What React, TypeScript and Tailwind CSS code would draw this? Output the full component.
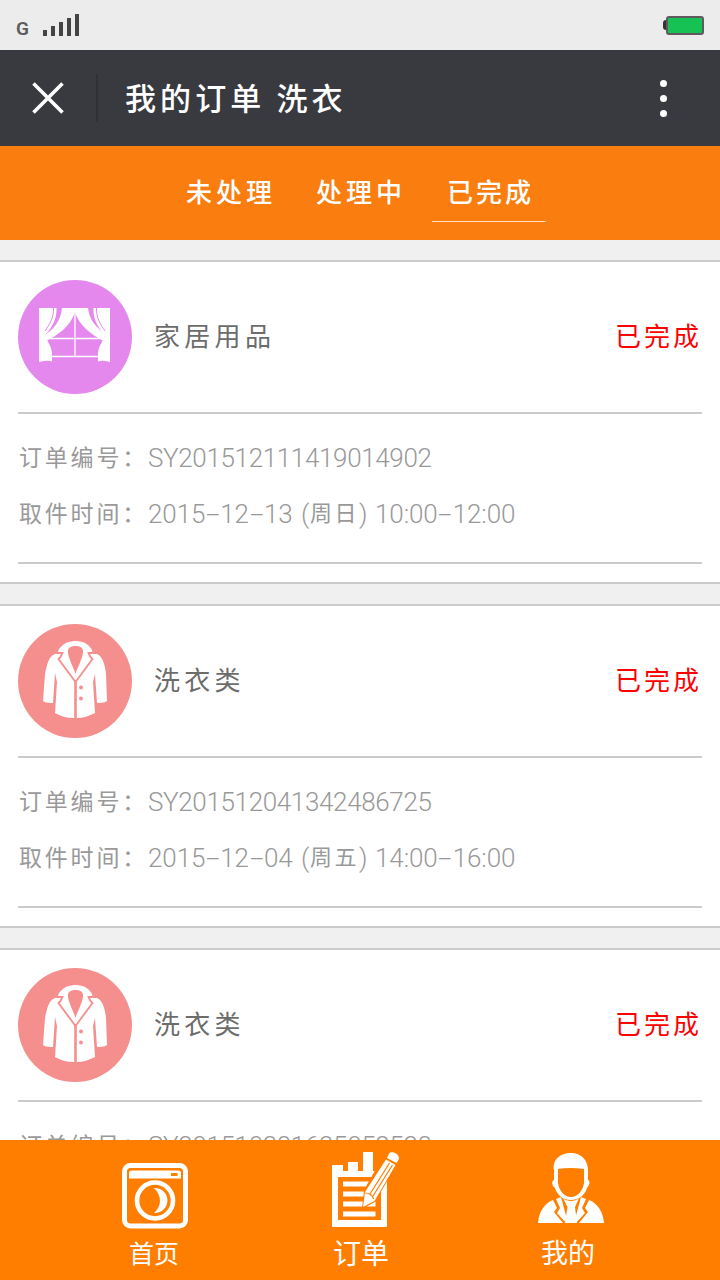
import { Fragment, type ReactNode } from "react";

const cjk = "font-['Noto_Sans_CJK_SC',sans-serif]";

function CurtainIcon() {
  return (
    <svg viewBox="0 0 114 114" className="size-[114px]">
      <circle cx="57" cy="57" r="57" fill="#e588ee" />
      <path fill="#fff" d="M21 28H38.500C39 38 35 47 27 55C28 60 34 66 34 74V81.500C30 80 26 81 21 82Z" />
      <path fill="#fff" d="M92 28H75.500C75 38 79 47 87 55C86 60 80 66 80 74V81.500C84 80 88 81 92 82Z" />
      <path fill="#fff" d="M44 28H70C71 40 79 48 87 54L86 61C73 55 61 45 57 32C53 45 41 55 28 61L27 55C36 49 43 40 44 28Z" />
      <path fill="none" stroke="#fff" strokeWidth="1.300" d="M57 30V77M29 58.500H86M34 76.500H80" />
      <path fill="none" stroke="#e588ee" strokeWidth="1" d="M35.500 28C36 38 31 45 27 51M78.500 28C78 38 83 45 87 51" />
    </svg>
  );
}

function CoatIcon() {
  return (
    <svg viewBox="0 0 114 114" className="size-[114px]">
      <circle cx="57" cy="57" r="57" fill="#f58f8d" />
      <path fill="#fff" d="M57.500 17C66 17 72 21 74.500 27L73 29L79 30C84 32 87 40 88 50L89 77C86 79 82 79 79 79L77 50L75 58L77 89C71 92 65 94 59 94H55.500C49 94 42 92 37 89L39 58L37 49L35 79C32 79 28 79 25 77L27 50C29 40 31 32 37 30L41 29L40 27C43 21 49 17 57.500 17Z" />
      <path fill="#f58f8d" d="M57.500 22C63 22 65.500 24 65 29C64 36 60 42 57.500 50C55 42 51 36 50 29C49.500 24 52 22 57.500 22Z" />
      <path fill="none" stroke="#f58f8d" strokeWidth="1.800" d="M38 29H44.500L42.500 33L40.500 35L57.500 58L74.500 35L72.500 33L70.500 29H78" />
      <path fill="none" stroke="#f58f8d" strokeWidth="2.600" d="M57.500 57V95" />
      <circle cx="63" cy="63.500" r="1.900" fill="#f58f8d" />
      <circle cx="63" cy="74.500" r="1.900" fill="#f58f8d" />
    </svg>
  );
}

function WasherIcon() {
  return (
    <svg viewBox="0 0 66 66" className="h-[66px] w-[66px]">
      <rect x="2.500" y="2.500" width="61" height="60.500" rx="6" fill="none" stroke="#fff" strokeWidth="5" />
      <path fill="#fff" fillRule="evenodd" d="M7 10Q7 7.500 10 7.500H56Q59 7.500 59 10V15.500H7ZM49 10V13H55.500V10Z" />
      <circle cx="33" cy="37.500" r="18" fill="none" stroke="#fff" strokeWidth="4.600" />
      <path fill="#fff" d="M32 25C50 25 50 50 32 50C40 43 40 33 32 25Z" />
    </svg>
  );
}

function OrderIcon() {
  return (
    <svg viewBox="0 0 68 78" className="h-[78px] w-[68px]">
      <path fill="#fff" fillRule="evenodd" d="M0 15H11V21H16V12H26V21H31V2H41V21H55V77H0ZM6 27V70H49V27Z" />
      <path stroke="#fff" strokeWidth="5" d="M11 34H38M11 44H33M11 54H43.500M11 64H43.500" />
      <path fill="#ff7e00" d="M54 1L68 9L43 52L30 59L32 40Z" />
      <path fill="#fff" d="M57 3.500C60 0 69 4.500 66.500 10L64.500 13L55 8ZM54 9.500L63.500 15L42.500 51L31 57L33 42Z" />
      <path stroke="#ff7e00" strokeWidth="1.200" fill="none" d="M57.500 13L38 44M60.500 15L41 46M33.500 43Q39 43 42 49" />
    </svg>
  );
}

function PersonIcon() {
  return (
    <svg viewBox="0 0 66 71" className="h-[71px] w-[66px]">
      <path fill="#fff" fillRule="evenodd" d="M33 0C43 0 50 7 50 17V27C53 28 51 33 49 35C47 42 41 47 33 47C25 47 19 42 17 35C14 33 13 28 16 27V17C14 7 22 0 33 0ZM20 16V30C21 37 26 44 33 44C40 44 45 37 46 30V16C37 14.500 28 14.500 20 16Z" />
      <path fill="#fff" d="M15 47L19 55L16 59L25 70H0C1 58 7 50 15 47ZM18 46L23 44L30 70H28L19 60L22 55ZM25 45C29 49 37 49 41 45L37 54L39 70H27L29.500 54ZM43 44L48 46L44 55L47 60L38 70H36ZM51 47C59 50 65 58 66 70H41L50 59L47 55Z" />
    </svg>
  );
}

type Order = { icon: ReactNode; name: string; id: string; time: string[] };

const orders: Order[] = [
  { icon: <CurtainIcon />, name: "家居用品", id: "SY201512111419014902", time: ["2015-12-13", "周日", "10:00-12:00"] },
  { icon: <CoatIcon />, name: "洗衣类", id: "SY201512041342486725", time: ["2015-12-04", "周五", "14:00-16:00"] },
  { icon: <CoatIcon />, name: "洗衣类", id: "SY201510281625052528", time: ["2015-10-28", "周三", "16:00-18:00"] },
];

/** Digits joined by wide hyphens. */
function Dashed({ text }: { text: string }) {
  return (
    <>
      {text.split("-").map((part, i) => (
        <Fragment key={i}>
          {i > 0 && <span className="inline-block w-[15px] text-center"><span className="inline-block scale-x-[1.900]">-</span></span>}
          {part}
        </Fragment>
      ))}
    </>
  );
}

function OrderCard({ order }: { order: Order }) {
  return (
    <section className="h-[324px] shrink-0 border-y-2 border-[#cbcbcb] bg-white px-[18px]">
      <div className="flex h-[152px] items-center border-b-2 border-[#cbcbcb]">
        {order.icon}
        <h2 className="ml-[22px] pb-[5px] text-[26px] tracking-[4.300px] text-[#6c6c6c]">{order.name}</h2>
        <span className="ml-auto pb-[5px] text-[26px] tracking-[3px] text-[#fe0000]">已完成</span>
      </div>
      <div className="flex h-[150px] flex-col border-b-2 border-[#cbcbcb] pt-4 text-[26px] leading-[56px] text-[#999]">
        <div className="flex h-14">
          <span className="-mt-0.5 w-[130px] pl-px text-[23px] tracking-[2.800px] whitespace-nowrap">订单编号：</span>
          <span className="font-['Roboto',sans-serif] font-light tracking-[-0.350px]">{order.id}</span>
        </div>
        <div className="flex h-14">
          <span className="-mt-0.5 w-[130px] pl-px text-[23px] tracking-[2.800px] whitespace-nowrap">取件时间：</span>
          <span className="flex font-['Roboto','Noto_Sans_CJK_SC',sans-serif] font-light whitespace-nowrap">
            <span className="w-[153px] tracking-[-0.100px]"><Dashed text={order.time[0]} /></span>
            <span className="w-[9px]">(</span>
            <span className="w-[49px] text-[22px] font-normal tracking-[2.500px]">{order.time[1]}</span>
            <span className="w-[16px]">)</span>
            <span className="tracking-[-0.100px]"><Dashed text={order.time[2]} /></span>
          </span>
        </div>
      </div>
    </section>
  );
}

export default function App() {
  return (
    <div className={`flex h-[1280px] w-[720px] flex-col overflow-hidden bg-[#f0f0f0] ${cjk}`}>
      <header className="flex h-[50px] shrink-0 items-center justify-between bg-[#ececec] pr-4 pl-4">
        <div className="flex items-end gap-[13px] pt-0.5">
          <span className="w-[14px] font-['Roboto',sans-serif] text-[19px] leading-[18px] font-semibold text-[#5b5b5b]">G</span>
          <div className="flex items-end gap-1 pb-0.5">
            <i className="h-[6px] w-1 bg-[#444]" />
            <i className="h-[10px] w-1 bg-[#444]" />
            <i className="h-[14px] w-1 bg-[#444]" />
            <i className="h-[18px] w-1 bg-[#444]" />
            <i className="h-[22px] w-1 bg-[#444]" />
          </div>
        </div>
        <div className="flex items-center">
          <i className="h-[10px] w-[3px] rounded-l-sm bg-[#333]" />
          <i className="h-[19px] w-[38px] rounded-[3px] border-2 border-[#62585f] bg-[#15c253]" />
        </div>
      </header>

      <div className="flex h-24 shrink-0 items-center bg-[#393a3f] text-white">
        <div className="flex h-12 w-[98px] items-center border-r-2 border-[#303136] pl-8">
          <svg viewBox="0 0 32 32" className="size-8" stroke="#fff" strokeWidth="3.600">
            <path d="M1.500 1.500L30.500 30.500M30.500 1.500L1.500 30.500" />
          </svg>
        </div>
        <h1 className="pb-0.5 pl-[27px] text-[31px] font-medium tracking-[4.100px]">我的订单 洗衣</h1>
        <div className="mr-[53px] ml-auto flex flex-col gap-[8px]">
          <i className="size-[7px] rounded-full bg-white" />
          <i className="size-[7px] rounded-full bg-white" />
          <i className="size-[7px] rounded-full bg-white" />
        </div>
      </div>

      <nav className="flex h-[94px] shrink-0 items-start gap-4 bg-[#f97e0f] pt-4 pl-[171px] text-[26px] font-medium tracking-[4px] text-white">
        <span className="h-[60px] w-[114px] pl-[15px] leading-[57px]">未处理</span>
        <span className="h-[60px] w-[115px] pl-[15px] leading-[57px]">处理中</span>
        <span className="h-[60px] w-[114px] border-b border-[#ffe0c3] pl-[15px] leading-[57px] tracking-[3px]">已完成</span>
      </nav>

      <main className="flex min-h-0 flex-1 flex-col gap-5 overflow-hidden pt-5">
        {orders.map((order) => (
          <OrderCard key={order.id} order={order} />
        ))}
      </main>

      <footer className="flex h-[140px] shrink-0 bg-[#ff7e00] text-white">
        <a className="ml-[103px] flex w-[102px] flex-col items-center pt-[23px]">
          <div className="pl-px"><WasherIcon /></div>
          <span className="mt-[7px] text-[25px] leading-[32px]">首页</span>
        </a>
        <a className="ml-[105px] flex w-[102px] flex-col items-center pt-[10px]">
          <div className="pl-[10px]"><OrderIcon /></div>
          <span className="mt-[7px] text-[28px] leading-[34px]">订单</span>
        </a>
        <a className="ml-[105px] flex w-[102px] flex-col items-center pt-[13px]">
          <div className="pl-[5px]"><PersonIcon /></div>
          <span className="mt-[11px] text-[27px] leading-[34px]">我的</span>
        </a>
      </footer>
    </div>
  );
}
